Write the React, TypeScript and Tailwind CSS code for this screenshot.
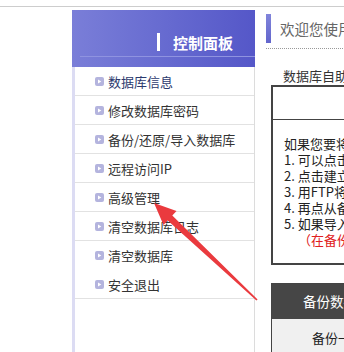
const menu = [
  '数据库信息',
  '修改数据库密码',
  '备份/还原/导入数据库',
  '远程访问IP',
  '高级管理',
  '清空数据库日志',
  '清空数据库',
  '安全退出',
]

const tips = [
  '如果您要将本地数据库导入',
  '1. 可以点击下方备份',
  '2. 点击建立备份',
  '3. 用FTP将文件上传',
  '4. 再点从备份还原',
  '5. 如果导入失败',
]

function MenuIcon() {
  return (
    <span className="flex h-[9px] w-[9px] shrink-0 items-center justify-center rounded-[2px] bg-[#b4b4de]">
      <svg width="5" height="5" viewBox="0 0 5 5">
        <path d="M1 0.5 L4.3 2.5 L1 4.5 Z" fill="#fff" />
      </svg>
    </span>
  )
}

function Sidebar() {
  return (
    <div className="mt-[3px] ml-[72px] flex w-[183px] shrink-0 flex-col">
      {/* Header */}
      <div className="relative h-[57px] bg-gradient-to-r from-[#7a7ed8] to-[#5557c8]">
        <div className="absolute left-[85px] top-[23px] h-[18px] w-[3px] bg-white" />
        <span className="absolute left-[101px] top-[25px] text-[15px] font-bold leading-[16px] text-white">
          控制面板
        </span>
        <div className="absolute left-[8px] right-0 top-[46px] h-px bg-[#8f93e0]" />
      </div>

      {/* Menu */}
      <div className="flex flex-1 flex-col border-l-[3px] border-r border-l-[#dcdcf3] border-r-[#dcdcdc]">
        {menu.map((m, i) => (
          <div
            key={m}
            className={`flex h-[29px] items-center gap-[4px] pl-[20px] ${i === 6 ? '' : 'border-b border-[#e2e2e2]'}`}
          >
            <MenuIcon />
            <span className={`text-[13px] leading-none ${i === 0 ? 'text-[#2c3a6e]' : 'text-[#333]'}`}>{m}</span>
          </div>
        ))}
      </div>
    </div>
  )
}

function Content() {
  return (
    <div className="ml-[8px] flex min-w-0 flex-1 flex-col overflow-hidden">
      <div className="flex w-[300px] flex-col">
        {/* Title */}
        <div className="mt-[7px] flex h-[29px] items-center">
          <div className="ml-[3px] h-full w-[5px] bg-gradient-to-b from-[#8185db] to-[#6265cc]" />
          <span className="ml-[9px] whitespace-nowrap text-[14.5px] text-[#666]">欢迎您使用数据库管理</span>
        </div>
        <div className="mt-[5px] ml-[3px] border-t border-dotted border-[#999]" />

        <p className="mt-[19px] ml-[20px] whitespace-nowrap text-[13px] leading-[16px] text-[#333]">
          数据库自助备份说明
        </p>

        {/* Notice box */}
        <div className="mt-[1px] ml-[8px] border-2 border-[#444]">
          <div className="h-[33px] border-b border-[#444]" />
          <div className="pt-[16px] pb-[15px] pl-[11px] text-[13px] leading-[16px] text-[#222]">
            {tips.map(t => (
              <p key={t} className="whitespace-nowrap">{t}</p>
            ))}
            <p className="whitespace-nowrap pl-[14px] text-[#e02020]">（在备份还原时勿关闭）</p>
          </div>
        </div>

        {/* Backup table */}
        <div className="mt-[18px] ml-[8px] border border-[#444]">
          <div className="flex h-[35px] items-center bg-[#464646] pl-[31px] text-[13.5px] text-white">
            备份数据库列表
          </div>
          <div className="flex h-[40px] items-start bg-[#f0f0f0] pl-[40px] pt-[9px] text-[13px] text-[#222]">
            备份一
          </div>
        </div>
      </div>
    </div>
  )
}

export default function App() {
  return (
    <div
      className="relative h-[352px] w-[344px] overflow-hidden bg-white"
      style={{ fontFamily: '"Noto Sans CJK SC", "Liberation Sans", sans-serif' }}
    >
      <div className="pt-[6px]">
        <div className="h-px bg-[#cdcdcd]" />
      </div>
      <div className="flex h-[345px]">
        <Sidebar />
        <Content />
      </div>

      {/* Red annotation arrow */}
      <svg className="pointer-events-none absolute inset-0" width="344" height="352">
        <polygon
          points="154,203 176.5,211 172.3,215.6 257.6,299.4 256.4,300.6 167.7,220.4 163.5,225"
          fill="#ea3a3e"
        />
      </svg>
    </div>
  )
}
